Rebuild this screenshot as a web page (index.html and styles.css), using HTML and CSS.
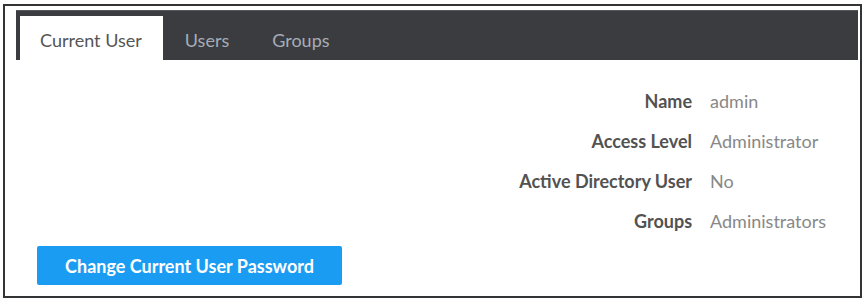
FILE: index.html
```html
<!DOCTYPE html>
<html>
<head>
<meta charset="utf-8">
<link rel="stylesheet" href="styles.css">
</head>
<body>
<div class="frame">
  <div class="tabs">
    <div class="tab active">Current User</div>
    <div class="tab">Users</div>
    <div class="tab">Groups</div>
  </div>
  <div class="panel">
    <div class="info">
      <div class="label">Name</div><div class="value">admin</div>
      <div class="label">Access Level</div><div class="value">Administrator</div>
      <div class="label">Active Directory User</div><div class="value">No</div>
      <div class="label">Groups</div><div class="value">Administrators</div>
    </div>
    <button class="btn">Change Current User Password</button>
  </div>
</div>
</body>
</html>
```
FILE: styles.css
```css
html, body {
  margin: 0;
  padding: 0;
  background: #ffffff;
}
body {
  font-family: Lato, "Open Sans", sans-serif;
  width: 865px;
  height: 300px;
  overflow: hidden;
}
.frame {
  box-sizing: border-box;
  margin: 4px 3px 0 3px;
  width: 859px;
  height: 294px;
  border: 2px solid #333436;
  padding: 4px 2px 0 11px;
}
.tabs {
  height: 50px;
  box-sizing: border-box;
  background: #3a3c40;
  border-top: 1px solid #55585c;
  padding: 5px 0 0 4px;
  display: flex;
  align-items: flex-end;
}
.tab {
  height: 44px;
  box-sizing: border-box;
  padding: 14px 21px 0 22px;
  line-height: 21px;
  font-size: 18px;
  color: #a7adb6;
}
.tab.active {
  background: #ffffff;
  color: #555555;
  padding: 14px 21px 0 20px;
}
.panel {
  padding: 21px 0 0 21px;
}
.info {
  display: grid;
  grid-template-columns: auto auto;
  justify-content: end;
  column-gap: 18px;
  padding-right: 32px;
  font-size: 18px;
}
.label, .value {
  height: 40px;
  line-height: 40px;
}
.label {
  text-align: right;
  font-weight: bold;
  color: #525252;
}
.value {
  color: #888888;
}
.btn {
  margin-top: 5px;
  width: 305px;
  height: 39px;
  border: none;
  border-radius: 2px;
  background: #1a9cf2;
  color: #ffffff;
  font-family: Lato, "Open Sans", sans-serif;
  font-size: 18px;
  font-weight: bold;
  padding: 0;
}
```
